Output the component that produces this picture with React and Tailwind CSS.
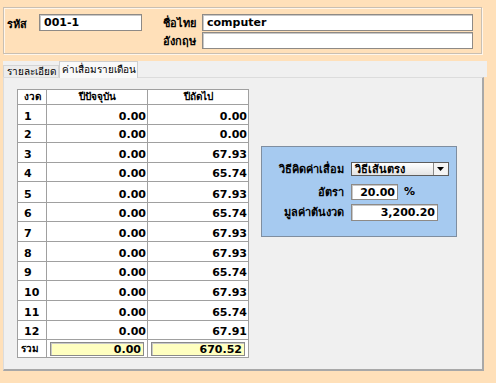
const rows = [
  { n: "1", a: "0.00", b: "0.00", h: "h-[20px]" },
  { n: "2", a: "0.00", b: "0.00", h: "h-[18px]" },
  { n: "3", a: "0.00", b: "67.93", h: "h-[20px]" },
  { n: "4", a: "0.00", b: "65.74", h: "h-[19px]" },
  { n: "5", a: "0.00", b: "67.93", h: "h-[21px]" },
  { n: "6", a: "0.00", b: "65.74", h: "h-[19px]" },
  { n: "7", a: "0.00", b: "67.93", h: "h-[20px]" },
  { n: "8", a: "0.00", b: "67.93", h: "h-[20px]" },
  { n: "9", a: "0.00", b: "65.74", h: "h-[19px]" },
  { n: "10", a: "0.00", b: "67.93", h: "h-[20px]" },
  { n: "11", a: "0.00", b: "65.74", h: "h-[20px]" },
  { n: "12", a: "0.00", b: "67.91", h: "h-[19px]" },
]

const inputCls =
  "bg-white border border-[#8e8a86] shadow-[inset_1px_1px_0_#c8c8c8] flex items-center px-[4px] leading-none"

const App = () => {
  return (
    <div className="w-[496px] h-[383px] bg-[#FFE0B9] overflow-hidden text-[11px] font-bold text-black font-['Tahoma','DejaVu_Sans',sans-serif]">
      {/* header group */}
      <div className="ml-[3px] mt-[7px] w-[479px] h-[47px] border border-[#c9bfb2] shadow-[inset_1px_1px_0_#fff6ea,1px_1px_0_#fff6ea] pt-[6px] pl-[2px]">
        <div className="flex items-center h-[17px]">
          <span className="w-[33px] pl-[1px] pt-[5px]">รหัส</span>
          <div className={`${inputCls} w-[103px] h-[17px]`}>001-1</div>
          <span className="w-[60px] text-right pr-[6px] pt-[3px]">ชื่อไทย</span>
          <div className={`${inputCls} w-[271px] h-[17px]`}>computer</div>
        </div>
        <div className="flex items-center h-[17px] mt-[1px]">
          <span className="w-[136px]" />
          <span className="w-[60px] text-right pr-[6px] pt-[3px]">อังกฤษ</span>
          <div className={`${inputCls} w-[271px] h-[17px]`} />
        </div>
      </div>

      {/* tabs */}
      <div className="ml-[3px] mt-[7px] w-[484px] h-[16px] bg-[#F0F0F0] flex items-end">
        <div className="w-[56px] h-[12px] border border-b-0 border-[#d4d4d4] bg-[#ececec] text-[10px] font-normal flex items-center justify-center leading-none">
          รายละเอียด
        </div>
        <div className="w-[79px] h-[17px] -mb-[1px] border border-b-0 border-[#cfcfcf] bg-[#f9f9f9] text-[10px] font-normal flex items-center justify-center leading-none">
          ค่าเสื่อมรายเดือน
        </div>
      </div>

      {/* panel */}
      <div className="ml-[3px] w-[481px] h-[294px] bg-[#F0F0F0] border border-[#dcdcdc] border-r-[2px] border-b-[2px] border-r-[#a8a8a8] border-b-[#a8a8a8] flex items-start pl-[13px] pt-[11px]">
        <table className="table-fixed border-collapse bg-white border border-[#8a8a8a] w-[231px]">
          <colgroup>
            <col className="w-[29px]" />
            <col className="w-[101px]" />
            <col className="w-[101px]" />
          </colgroup>
          <thead>
            <tr className="h-[15px]">
              <th className="border border-[#a0a0a0] text-[10px] text-center leading-none">งวด</th>
              <th className="border border-[#a0a0a0] text-[10px] text-center leading-none">ปีปัจจุบัน</th>
              <th className="border border-[#a0a0a0] text-[10px] text-center leading-none">ปีถัดไป</th>
            </tr>
          </thead>
          <tbody>
            {rows.map((r) => (
              <tr key={r.n} className={r.h}>
                <td className="border border-[#a0a0a0] align-bottom pb-[2px] pl-[6px] leading-none">{r.n}</td>
                <td className="border border-[#a0a0a0] align-bottom pb-[2px] pr-[1px] text-right leading-none">{r.a}</td>
                <td className="border border-[#a0a0a0] align-bottom pb-[2px] pr-[1px] text-right leading-none">{r.b}</td>
              </tr>
            ))}
            <tr className="h-[18px]">
              <td className="border border-[#a0a0a0] text-[10px] pl-[3px] leading-none">รวม</td>
              <td className="border border-[#a0a0a0] px-[3px]">
                <div className="h-[14px] bg-[#FFFFC0] border border-[#8a8a8a] shadow-[inset_1px_1px_0_#c8c8c8] text-right pr-[2px] leading-[13px]">
                  0.00
                </div>
              </td>
              <td className="border border-[#a0a0a0] px-[3px]">
                <div className="h-[14px] bg-[#FFFFC0] border border-[#8a8a8a] shadow-[inset_1px_1px_0_#c8c8c8] text-right pr-[2px] leading-[13px]">
                  670.52
                </div>
              </td>
            </tr>
          </tbody>
        </table>

        {/* depreciation method box */}
        <div className="ml-[12px] mt-[57px] w-[196px] h-[91px] bg-[#A6CAF0] border border-[#7f8ea0] pt-[15px]">
          <div className="flex items-center h-[14px]">
            <span className="w-[82px] text-right pt-[2px]">วิธีคิดค่าเสื่อม</span>
            <div className="ml-[7px] w-[98px] h-[14px] border border-[#5c5c5c] bg-gradient-to-b from-[#ffffff] to-[#e4e4e4] flex items-center">
              <span className="flex-1 pl-[3px] leading-none">วิธีเส้นตรง</span>
              <div className="w-[14px] h-[12px] mr-[1px] border-l border-[#8a8a8a] bg-[#f4f4f4] flex items-center justify-center">
                <svg width="7" height="4" viewBox="0 0 7 4">
                  <path d="M0 0H7L3.5 4Z" fill="#000" />
                </svg>
              </div>
            </div>
          </div>
          <div className="flex items-center h-[16px] mt-[8px]">
            <span className="w-[82px] text-right pt-[2px]">อัตรา</span>
            <div className={`${inputCls} ml-[7px] w-[47px] h-[16px] justify-end pr-[2px]`}>20.00</div>
            <span className="ml-[6px]">%</span>
          </div>
          <div className="flex items-center h-[17px] mt-[4px]">
            <span className="w-[82px] text-right pt-[2px]">มูลค่าต้นงวด</span>
            <div className={`${inputCls} ml-[7px] w-[87px] h-[17px] justify-end pr-[2px]`}>3,200.20</div>
          </div>
        </div>
      </div>
    </div>
  )
}

export default App
